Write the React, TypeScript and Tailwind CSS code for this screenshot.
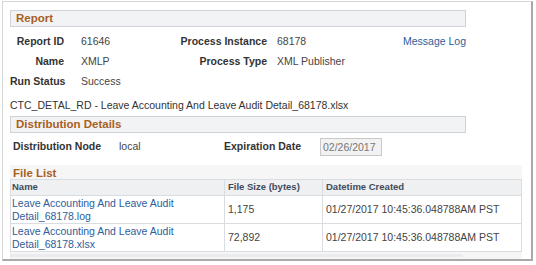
import React from 'react';

const font = { fontFamily: '"Liberation Sans", Arial, sans-serif' };

const SectionBar: React.FC<{ title: string }> = ({ title }) => (
  <div className="h-[17px] w-[456px] border border-[#cfd3d8] bg-[#f1f3f5] pl-[5px] text-[11.5px] font-bold leading-[15px] text-[#a8601f]">
    {title}
  </div>
);

const files = [
  { name: 'Leave Accounting And Leave Audit Detail_68178.log', size: '1,175', created: '01/27/2017 10:45:36.048788AM PST' },
  { name: 'Leave Accounting And Leave Audit Detail_68178.xlsx', size: '72,892', created: '01/27/2017 10:45:36.048788AM PST' },
];

export default function App() {
  return (
    <div className="h-[265px] w-[536px] bg-white pt-px pl-[2px]" style={font}>
      <div className="h-[260px] w-[531px] whitespace-nowrap border-l border-t border-[#d6d6d6] border-r-2 border-b-2 border-r-[#a9a9a9] border-b-[#a9a9a9] pl-[7px] pt-[8px] text-[10.5px] text-[#444]">
        <SectionBar title="Report" />

        <div className="mt-[5px] flex flex-col">
          <div className="flex h-[20px] items-center">
            <span className="w-[54px] text-right font-bold text-[#333]">Report ID</span>
            <span className="ml-[17px] w-[60px]">61646</span>
            <span className="w-[126px] text-right font-bold text-[#333]">Process Instance</span>
            <span className="ml-[10px] w-[126px]">68178</span>
            <span className="text-[#2e5d9c]">Message Log</span>
          </div>
          <div className="flex h-[20px] items-center">
            <span className="w-[54px] text-right font-bold text-[#333]">Name</span>
            <span className="ml-[17px] w-[60px]">XMLP</span>
            <span className="w-[126px] text-right font-bold text-[#333]">Process Type</span>
            <span className="ml-[10px]">XML Publisher</span>
          </div>
          <div className="flex h-[20px] items-center">
            <span className="w-[54px] text-right font-bold text-[#333]">Run Status</span>
            <span className="ml-[17px]">Success</span>
          </div>
        </div>

        <div className="mt-[5px] h-[16px] leading-[16px] text-[#333]">
          CTC_DETAL_RD - Leave Accounting And Leave Audit Detail_68178.xlsx
        </div>

        <div className="mt-[3px]">
          <SectionBar title="Distribution Details" />
        </div>

        <div className="mt-[5px] flex h-[18px] items-center">
          <span className="ml-[3px] w-[106px] font-bold text-[#333]">Distribution Node</span>
          <span className="w-[105px]">local</span>
          <span className="w-[96px] font-bold text-[#333]">Expiration Date</span>
          <span className="h-[18px] w-[62px] border border-[#c9c9c9] bg-[#f2f2f2] pl-[2px] leading-[16px] text-[#777]">
            02/26/2017
          </span>
        </div>

        <div className="mt-[9px] w-[512px] bg-[#f6f6f6] pb-[2px]">
          <div className="h-[14px] pl-[3px] pt-[2px] text-[11.5px] font-bold leading-[12px] text-[#a8601f]">File List</div>
          <table className="w-[512px] border-collapse border border-[#d9dde2] bg-white">
            <thead>
              <tr className="h-[16px] bg-[#eef0f2] text-left text-[9.5px] font-bold text-[#3f4b5c]">
                <th className="w-[214px] border border-[#d9dde2] px-[1px] font-bold">Name</th>
                <th className="w-[98px] border border-[#d9dde2] px-[3px] font-bold">File Size (bytes)</th>
                <th className="border border-[#d9dde2] px-[3px] font-bold">Datetime Created</th>
              </tr>
            </thead>
            <tbody>
              {files.map((f) => (
                <tr key={f.name} className="h-[28px]">
                  <td className="whitespace-normal border border-[#d9dde2] px-[1px] pr-[40px] leading-[13px] text-[#2e5d9c]">{f.name}</td>
                  <td className="border border-[#d9dde2] px-[3px]">{f.size}</td>
                  <td className="border border-[#d9dde2] px-[3px]">{f.created}</td>
                </tr>
              ))}
            </tbody>
          </table>
          <div className="mt-[2px] h-[3px] w-[453px] bg-[#e9ebee]" />
        </div>
      </div>
    </div>
  );
}
